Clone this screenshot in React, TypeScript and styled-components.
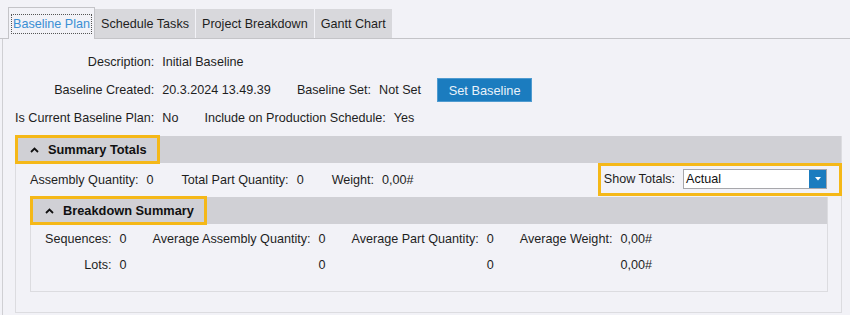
import styled, { createGlobalStyle } from "styled-components"

const GlobalStyle = createGlobalStyle`
    html, body {
        margin: 0;
        padding: 0;
        background: #f2f2f7;
    }
    body {
        font-family: "Liberation Sans", Arial, sans-serif;
        font-size: 12.6px;
        color: #1e1e1e;
    }
`

const Page = styled.div`
    width: 850px;
    height: 315px;
    overflow: hidden;
    background: #f2f2f7;
    padding-top: 7px;
    box-sizing: border-box;
`

const TabStrip = styled.div`
    display: flex;
    align-items: flex-end;
    height: 32px;
    padding-left: 8px;
    border-bottom: 1px solid #c4c4c8;
    box-sizing: border-box;
`

const Tab = styled.div<{ $active?: boolean }>`
    display: flex;
    align-items: center;
    justify-content: center;
    box-sizing: border-box;
    padding: 0 ${(p) => (p.$active ? "3px" : "5px")};
    height: ${(p) => (p.$active ? "32px" : "29px")};
    margin-bottom: ${(p) => (p.$active ? "-1px" : "0")};
    margin-right: ${(p) => (p.$active ? "0" : "1px")};
    background: ${(p) => (p.$active ? "#f2f2f7" : "#d8d8dc")};
    border: ${(p) => (p.$active ? "1px solid #c4c4c8" : "none")};
    border-bottom: none;
    color: ${(p) => (p.$active ? "#3a8fd4" : "#1e1e1e")};
    font-size: 12.6px;

    span {
        padding: 2px 1px;
        outline: ${(p) => (p.$active ? "1px dotted #555" : "none")};
    }
`

const TabPanel = styled.div`
    margin-left: 2px;
    border-left: 1px solid #cfcfd3;
    padding: 12px 0 0 12px;
    height: 280px;
    box-sizing: border-box;
`

const Form = styled.div`
    display: grid;
    grid-template-columns: auto 1fr;
    column-gap: 8px;
    row-gap: 4px;
    margin-bottom: 7px;
`

const Label = styled.div`
    white-space: nowrap;
    display: flex;
    align-items: center;
    justify-content: flex-end;
`

const FieldLine = styled.div<{ $h: number }>`
    display: flex;
    align-items: center;
    min-height: ${(p) => p.$h}px;
    white-space: nowrap;
`

const InlineLabel = styled.span`
    margin-left: 26px;
    margin-right: 8px;
`

const PrimaryButton = styled.button`
    margin-left: 16px;
    width: 95px;
    height: 24px;
    background: #1b7cbf;
    border: 1px solid #4f9bd0;
    color: #e9f2fa;
    font-family: inherit;
    font-size: 12.8px;
    padding: 0;
`

const SummaryBox = styled.div`
    width: 827px;
    height: 177px;
    border: 1px solid #dcdce0;
    border-top: none;
    box-sizing: border-box;
`

const SectionHeader = styled.div`
    height: 27px;
    background: #d0d0d5;
    display: flex;
`

const HighlightTitle = styled.div<{ $pad: number }>`
    display: flex;
    align-items: center;
    gap: 9px;
    margin: -1px 0 -1px -1px;
    padding: 0 ${(p) => p.$pad}px 0 12px;
    border: 3px solid #f5b818;
    font-weight: bold;
    font-size: 12.8px;
    color: #111;
`

const TotalsRow = styled.div`
    display: flex;
    align-items: center;
    height: 33px;
    padding-left: 14px;
    white-space: nowrap;
`

const Pair = styled.span<{ $first?: boolean }>`
    margin-left: ${(p) => (p.$first ? "0" : "28px")};

    b {
        font-weight: normal;
        margin-left: 8px;
    }
`

const ShowTotals = styled.div`
    margin-left: auto;
    height: 33px;
    box-sizing: border-box;
    border: 3px solid #f5b818;
    margin-right: -1px;
    margin-top: -1px;
    display: flex;
    align-items: center;
    padding: 0 12px 0 3px;
    gap: 8px;
`

const Select = styled.div`
    width: 144px;
    height: 20px;
    box-sizing: border-box;
    background: #fff;
    border: 1px solid #a7a7ab;
    display: flex;
    align-items: center;
    padding-left: 2px;
    color: #111;

    span {
        flex: 1;
    }
`

const DropButton = styled.div`
    width: 17px;
    height: 18px;
    background: #1b7cbf;
    display: flex;
    align-items: center;
    justify-content: center;
`

const BreakdownBox = styled.div`
    margin: 1px 13px 0 14px;
    height: 95px;
    border: 1px solid #dcdce0;
    border-top: none;
    box-sizing: border-box;
`

const BreakdownGrid = styled.div`
    display: grid;
    grid-template-columns: repeat(8, auto);
    justify-content: start;
    row-gap: 6px;
    padding: 5px 0 0 14px;
    white-space: nowrap;
`

const Cell = styled.div<{ $label?: boolean; $first?: boolean }>`
    height: 20px;
    display: flex;
    align-items: center;
    justify-content: ${(p) => (p.$first ? "flex-end" : "flex-start")};
    padding-left: ${(p) => (p.$label ? (p.$first ? "0" : "26px") : "8px")};
`

const Chevron = () => (
    <svg width="9" height="6" viewBox="0 0 9 6">
        <polyline points="1,5 4.5,1.5 8,5" fill="none" stroke="#111" strokeWidth="1.8" />
    </svg>
)

const DropArrow = () => (
    <svg width="6" height="4" viewBox="0 0 6 4">
        <polygon points="0,0 6,0 3,3.5" fill="#fff" />
    </svg>
)

const tabs = ["Baseline Plan", "Schedule Tasks", "Project Breakdown", "Gantt Chart"]

const breakdown = [
    ["Sequences:", "0", "Average Assembly Quantity:", "0", "Average Part Quantity:", "0", "Average Weight:", "0,00#"],
    ["Lots:", "0", "", "0", "", "0", "", "0,00#"],
]

const App = () => {
    return <Page>
        <GlobalStyle />
        <TabStrip>
            {tabs.map((t, i) => <Tab key={t} $active={i === 0}><span>{t}</span></Tab>)}
        </TabStrip>
        <TabPanel>
            <Form>
                <Label>Description:</Label>
                <FieldLine $h={22}>Initial Baseline</FieldLine>
                <Label>Baseline Created:</Label>
                <FieldLine $h={26}>
                    20.3.2024 13.49.39
                    <InlineLabel>Baseline Set:</InlineLabel>
                    Not Set
                    <PrimaryButton>Set Baseline</PrimaryButton>
                </FieldLine>
                <Label>Is Current Baseline Plan:</Label>
                <FieldLine $h={22}>
                    No
                    <InlineLabel>Include on Production Schedule:</InlineLabel>
                    Yes
                </FieldLine>
            </Form>
            <SummaryBox>
                <SectionHeader>
                    <HighlightTitle $pad={10}><Chevron />Summary Totals</HighlightTitle>
                </SectionHeader>
                <TotalsRow>
                    <Pair $first>Assembly Quantity:<b>0</b></Pair>
                    <Pair>Total Part Quantity:<b>0</b></Pair>
                    <Pair>Weight:<b>0,00#</b></Pair>
                    <ShowTotals>
                        Show Totals:
                        <Select><span>Actual</span><DropButton><DropArrow /></DropButton></Select>
                    </ShowTotals>
                </TotalsRow>
                <BreakdownBox>
                    <SectionHeader>
                        <HighlightTitle $pad={10}><Chevron />Breakdown Summary</HighlightTitle>
                    </SectionHeader>
                    <BreakdownGrid>
                        {breakdown.map((row, r) => row.map((c, i) =>
                            <Cell key={`bd-${r}-${i}`} $label={i % 2 === 0} $first={i === 0}>{c}</Cell>
                        ))}
                    </BreakdownGrid>
                </BreakdownBox>
            </SummaryBox>
        </TabPanel>
    </Page>
}

export default App
